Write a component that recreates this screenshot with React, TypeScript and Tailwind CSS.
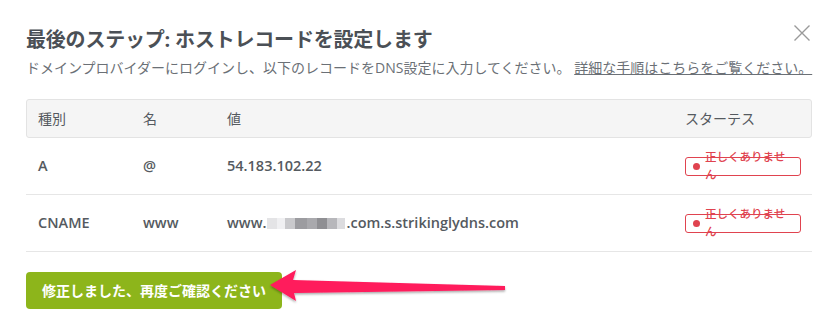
import React from 'react';

const font = { fontFamily: '"Open Sans", "Noto Sans CJK JP", sans-serif' };

interface RecordRow {
  type: string;
  name: string;
  value: React.ReactNode;
}

const Blur: React.FC = () => (
  <span className="inline-flex h-[11px] items-stretch align-middle mx-[1px]">
    <span className="w-[10px] bg-[#e4e4e6]"></span>
    <span className="w-[8px] bg-[#f0f0f2]"></span>
    <span className="w-[10px] bg-[#c9c9cc]"></span>
    <span className="w-[12px] bg-[#9c9ca0]"></span>
    <span className="w-[10px] bg-[#a9a9ad]"></span>
    <span className="w-[10px] bg-[#8f8f93]"></span>
    <span className="w-[10px] bg-[#b7b7bb]"></span>
    <span className="w-[8px] bg-[#dcdcdf]"></span>
  </span>
);

const StatusBadge: React.FC = () => (
  <div className="flex items-center h-[19px] w-[116px] border border-[#e0434f] rounded-[3px] pl-[7px] overflow-visible">
    <span className="w-[7px] h-[7px] rounded-full bg-[#e0434f] shrink-0"></span>
    <span className="ml-[5px] w-[82px] text-[11.5px] leading-[18px] font-medium text-[#e0434f]">正しくありません</span>
  </div>
);

const rows: RecordRow[] = [
  { type: 'A', name: '@', value: '54.183.102.22' },
  {
    type: 'CNAME',
    name: 'www',
    value: (
      <span className="inline-flex items-center">
        www.<Blur />.com.s.strikinglydns.com
      </span>
    ),
  },
];

const App: React.FC = () => {
  return (
    <div className="relative w-[833px] h-[324px] bg-white overflow-hidden" style={font}>
      <div className="pl-[26px] pr-[21px] pt-[25px]">
        <div className="flex items-start justify-between">
          <h2 className="text-[20px] leading-[30px] font-bold text-[#4b5056] tracking-[-0.2px]">
            最後のステップ: ホストレコードを設定します
          </h2>
          <button className="mt-[-1px] mr-[1px] text-[#9a9a9a]">
            <svg width="18" height="18" viewBox="0 0 18 18" fill="none" stroke="currentColor" strokeWidth="1.4">
              <path d="M1.5 1.5 L16.5 16.5 M16.5 1.5 L1.5 16.5" />
            </svg>
          </button>
        </div>
        <p className="mt-[3px] text-[14px] leading-[20px] text-[#6b7076] whitespace-nowrap">
          ドメインプロバイダーにログインし、以下のレコードをDNS設定に入力してください。{' '}
          <a className="underline text-[#6b7076]">詳細な手順はこちらをご覧ください。</a>
        </p>

        <div className="mt-[21px] w-[786px]">
          <div className="grid grid-cols-[105px_84px_458px_139px] h-[39px] items-center bg-[#f5f5f5] border border-[#e3e3e3] rounded-[3px] text-[14px] text-[#555a60]">
            <div className="pl-[11px]">種別</div>
            <div className="pl-[11px]">名</div>
            <div className="pl-[11px]">値</div>
            <div className="pl-[11px]">スターテス</div>
          </div>
          {rows.map((row) => (
            <div
              key={row.type}
              className="grid grid-cols-[105px_84px_458px_139px] h-[57px] items-center border-b border-[#e6e6e6] text-[14.5px] font-semibold text-[#555a60]"
            >
              <div className="pl-[12px]">{row.type}</div>
              <div className="pl-[12px]">{row.name}</div>
              <div className="pl-[12px]">{row.value}</div>
              <div className="pl-[12px]">
                <StatusBadge />
              </div>
            </div>
          ))}
        </div>

        <button className="mt-[20px] h-[37px] px-[16px] rounded-[4px] bg-[#8db51b] text-white text-[14px] font-bold">
          修正しました、再度ご確認ください
        </button>
      </div>

      <svg className="absolute left-0 top-0 pointer-events-none" width="833" height="324" viewBox="0 0 833 324">
        <defs>
          <filter id="sh" x="-10%" y="-50%" width="120%" height="200%">
            <feDropShadow dx="0" dy="1.5" stdDeviation="1.2" floodColor="#000" floodOpacity="0.35" />
          </filter>
        </defs>
        <polygon
          points="270,285 296,270 293,280 505,286 505,290 294,293 296,301"
          fill="#ff1a5c"
          filter="url(#sh)"
        />
      </svg>
    </div>
  );
};

export default App;
